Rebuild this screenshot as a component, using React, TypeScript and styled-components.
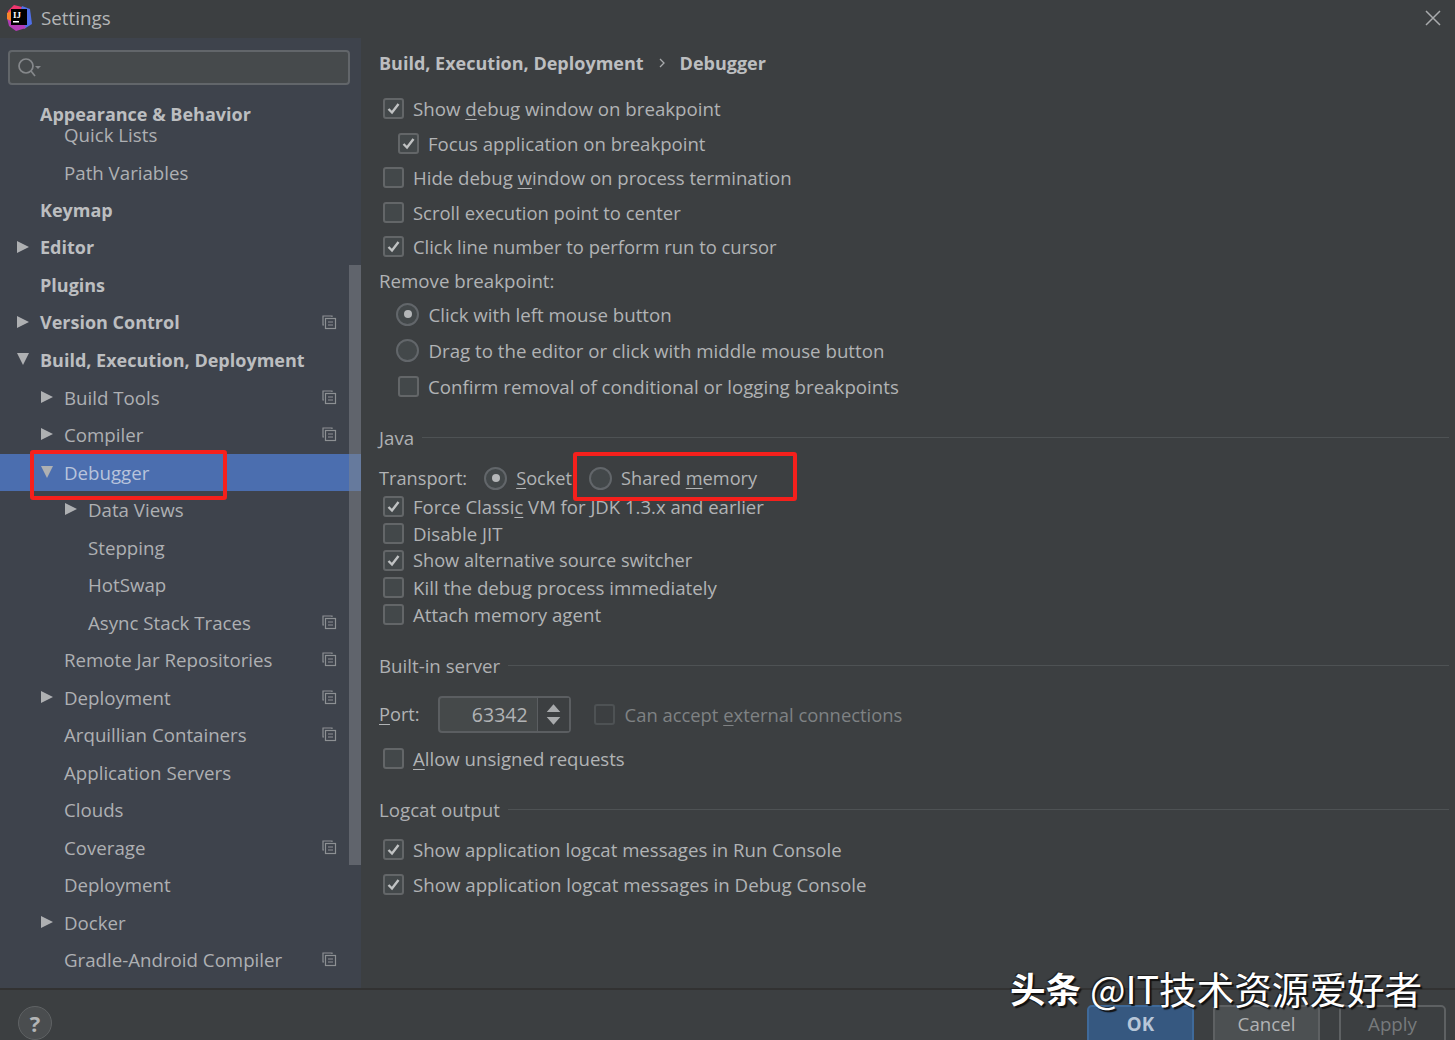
import React from "react";
import styled, { createGlobalStyle } from "styled-components";

const FONT = `"Open Sans", "Noto Sans", "Liberation Sans", sans-serif`;

const Global = createGlobalStyle`
  html, body { margin: 0; padding: 0; background: #3c3f41; }
  * { box-sizing: border-box; }
`;

const Window = styled.div`
  position: relative;
  width: 1455px;
  height: 1040px;
  overflow: hidden;
  display: flex;
  flex-direction: column;
  background: #3c3f41;
  color: #bbbbbb;
  font-family: ${FONT};
  font-size: 18.7px;
`;

const TitleBar = styled.header`
  flex: 0 0 38px;
  display: flex;
  align-items: center;
  padding: 0 14px 2px 6px;
  gap: 9px;
`;
const TitleText = styled.span`
  flex: 1;
  font-size: 18.8px;
  color: #b4b6b7;
`;
const CloseGlyph = styled.svg`
  width: 16px;
  height: 16px;
  stroke: #a9abad;
  stroke-width: 1.5;
`;

const Body = styled.div`
  flex: 0 0 950px;
  display: flex;
`;

const Sidebar = styled.nav`
  position: relative;
  flex: 0 0 361px;
  background: #3e434c;
  padding-top: 12px;
  overflow: hidden;
`;
const SearchBox = styled.div`
  width: 342px;
  height: 35px;
  margin: 0 0 31.25px 8px;
  border: 2px solid #62666a;
  border-radius: 4px;
  background: #464a4c;
  display: flex;
  align-items: center;
  padding-left: 6px;
`;
const StickyHeader = styled.div`
  position: absolute;
  left: 40px;
  top: 62px;
  font-weight: 700;
  font-size: 18px;
  line-height: 28px;
  color: #bcbec0;
`;
const TreeRow = styled.div<{ $level: number; $bold?: boolean; $selected?: boolean }>`
  position: relative;
  height: 37.5px;
  display: flex;
  align-items: center;
  padding-left: ${(p) => 40 + p.$level * 24}px;
  padding-bottom: 1px;
  font-weight: ${(p) => (p.$bold ? 700 : 400)};
  font-size: ${(p) => (p.$bold ? "18px" : "18.7px")};
  color: ${(p) => (p.$selected ? "#b8c4dc" : p.$bold ? "#bcbec0" : "#aeb0b3")};
  background: ${(p) => (p.$selected ? "#4b6eaf" : "transparent")};
`;
const Arrow = styled.svg<{ $level: number }>`
  position: absolute;
  left: ${(p) => 15 + p.$level * 24}px;
  top: 10px;
  width: 16px;
  height: 16px;
  fill: #aeb0b2;
`;
const CopyGlyph = styled.svg`
  position: absolute;
  left: 322px;
  top: 11px;
  width: 15px;
  height: 15px;
  fill: none;
  stroke: #8d9093;
  stroke-width: 1.2;
`;
const ScrollThumb = styled.div`
  position: absolute;
  left: 349px;
  top: 227px;
  width: 12px;
  height: 600px;
  background: rgba(130, 134, 140, 0.5);
`;

const Main = styled.main`
  flex: 1;
  padding: 0 6px 0 18px;
  display: flex;
  flex-direction: column;
`;
const Crumbs = styled.div`
  height: 50px;
  margin-bottom: 3.5px;
  display: flex;
  align-items: center;
  font-weight: 700;
  font-size: 18px;
  color: #bcbec0;
  gap: 13px;
`;
const CrumbSep = styled.svg`
  width: 10px;
  height: 14px;
  fill: none;
  stroke: #a8aaac;
  stroke-width: 1.3;
`;
const Row = styled.div<{ $h: number; $indent?: number; $gap?: number }>`
  flex: 0 0 ${(p) => p.$h}px;
  display: flex;
  align-items: center;
  padding-left: ${(p) => p.$indent ?? 0}px;
  gap: ${(p) => p.$gap ?? 0}px;
  white-space: nowrap;
  color: #b1b3b5;
`;
const Label = styled.span<{ $fs?: number }>`
  white-space: pre;
  font-size: ${(p) => p.$fs ?? 18.7}px;
`;
const TightLabel = styled(Label)`
  margin-left: -8px;
`;
const CheckBoxFrame = styled.span<{ $muted?: boolean }>`
  flex: 0 0 21px;
  width: 21px;
  height: 21px;
  margin: 0 9.5px 0 3.5px;
  border: 2px solid ${(p) => (p.$muted ? "#4e5254" : "#636668")};
  border-radius: 3px;
  background: ${(p) => (p.$muted ? "transparent" : "#43484a")};
  display: flex;
  align-items: center;
  justify-content: center;
`;
const CheckGlyph = styled.svg`
  width: 15px;
  height: 15px;
  fill: none;
  stroke: #c0c2c3;
  stroke-width: 2.4;
`;
const RadioFrame = styled.span<{ $on?: boolean }>`
  flex: 0 0 23px;
  width: 23px;
  height: 23px;
  border: 2px solid #62666a;
  border-radius: 50%;
  background: #43484a;
  display: flex;
  align-items: center;
  justify-content: center;
  &::after {
    content: "";
    display: ${(p) => (p.$on ? "block" : "none")};
    width: 8px;
    height: 8px;
    border-radius: 50%;
    background: #b4b6b8;
  }
`;
const Mn = styled.span`
  text-decoration: underline;
  text-underline-offset: 3px;
  text-decoration-thickness: 1px;
`;
const SectionHead = styled.div<{ $top: number; $after: number }>`
  flex: 0 0 30px;
  margin-top: ${(p) => p.$top}px;
  margin-bottom: ${(p) => p.$after}px;
  display: flex;
  align-items: center;
  gap: 8px;
  color: #aeb0b2;
  &::after {
    content: "";
    flex: 1;
    height: 1px;
    background: #4e5254;
  }
`;
const Spinner = styled.div`
  width: 133px;
  height: 37px;
  border: 2px solid #5b5e61;
  border-radius: 4px;
  background: #45494a;
  display: flex;
  align-items: stretch;
  margin-left: 18px;
`;
const SpinnerValue = styled.div`
  flex: 1;
  display: flex;
  align-items: center;
  justify-content: flex-end;
  padding-right: 9px;
  font-size: 19.5px;
  color: #b1b3b5;
`;
const SpinnerArrows = styled.svg`
  flex: 0 0 32px;
  width: 32px;
  height: 33px;
  border-left: 1px solid #5b5e61;
  background: #3c3f41;
  fill: #a8aaac;
`;
const Spacer = styled.span<{ $w: number }>`
  flex: 0 0 ${(p) => p.$w}px;
`;
const Dim = styled(Label)`
  color: #7f8284;
`;

const Footer = styled.footer`
  flex: 0 0 52px;
  border-top: 2px solid #323232;
  display: flex;
  align-items: flex-start;
  padding: 15px 9px 0 18px;
  gap: 19px;
`;
const Help = styled.div`
  width: 34px;
  height: 34px;
  margin-top: 1px;
  margin-right: auto;
  border-radius: 50%;
  border: 1px solid #5f6264;
  background: #4a4d4f;
  color: #b3b5b7;
  font-weight: 700;
  font-size: 22px;
  display: flex;
  align-items: center;
  justify-content: center;
`;
const FooterButton = styled.div<{ $kind: "ok" | "plain" | "off" }>`
  width: 107px;
  height: 44px;
  border-radius: 5px;
  border: 2px solid ${(p) => (p.$kind === "ok" ? "#3f6a9a" : "#5e6163")};
  background: ${(p) => (p.$kind === "ok" ? "#365880" : p.$kind === "plain" ? "#4c5052" : "#3c3f41")};
  color: ${(p) => (p.$kind === "ok" ? "#b7c6d8" : p.$kind === "plain" ? "#b1b3b5" : "#777a7c")};
  font-weight: ${(p) => (p.$kind === "ok" ? 700 : 400)};
  text-align: center;
  line-height: 34px;
`;

const RedBox = styled.div<{ $x: number; $y: number; $w: number; $h: number }>`
  position: absolute;
  left: ${(p) => p.$x}px;
  top: ${(p) => p.$y}px;
  width: ${(p) => p.$w}px;
  height: ${(p) => p.$h}px;
  border: 4px solid #f5201c;
  border-radius: 3px;
`;
const Watermark = styled.div`
  position: absolute;
  left: 1010px;
  top: 962px;
  display: flex;
  align-items: center;
  gap: 9px;
  color: #ffffff;
  font-family: "Noto Sans CJK SC", sans-serif;
  font-size: 37.6px;
  line-height: 52px;
  white-space: nowrap;
  text-shadow: 2px 2px 1px #111, -1px -1px 1px rgba(0, 0, 0, 0.5);
`;
const WatermarkBrand = styled.span`
  font-weight: 700;
  font-size: 35.5px;
`;

const Check = ({ on, muted }: { on?: boolean; muted?: boolean }) => (
  <CheckBoxFrame $muted={muted}>
    {on && (
      <CheckGlyph viewBox="0 0 15 15">
        <path d="M2.5 8 L6 11.5 L12.5 3" />
      </CheckGlyph>
    )}
  </CheckBoxFrame>
);

type Item = { t: string; l: number; b?: boolean; a?: "r" | "d"; c?: boolean; s?: boolean };
const items: Item[] = [
  { t: "Quick Lists", l: 1 },
  { t: "Path Variables", l: 1 },
  { t: "Keymap", l: 0, b: true },
  { t: "Editor", l: 0, b: true, a: "r" },
  { t: "Plugins", l: 0, b: true },
  { t: "Version Control", l: 0, b: true, a: "r", c: true },
  { t: "Build, Execution, Deployment", l: 0, b: true, a: "d" },
  { t: "Build Tools", l: 1, a: "r", c: true },
  { t: "Compiler", l: 1, a: "r", c: true },
  { t: "Debugger", l: 1, a: "d", s: true },
  { t: "Data Views", l: 2, a: "r" },
  { t: "Stepping", l: 2 },
  { t: "HotSwap", l: 2 },
  { t: "Async Stack Traces", l: 2, c: true },
  { t: "Remote Jar Repositories", l: 1, c: true },
  { t: "Deployment", l: 1, a: "r", c: true },
  { t: "Arquillian Containers", l: 1, c: true },
  { t: "Application Servers", l: 1 },
  { t: "Clouds", l: 1 },
  { t: "Coverage", l: 1, c: true },
  { t: "Deployment", l: 1 },
  { t: "Docker", l: 1, a: "r" },
  { t: "Gradle-Android Compiler", l: 1, c: true },
];

const Logo = () => (
  <svg width="26" height="28" viewBox="0 0 26 28">
    <polygon points="8,1 16,3 14,14 1,14 2,7" fill="#f0356e" />
    <polygon points="16,2 24,5 26,20 18,25 13,12" fill="#4f6fe8" />
    <polygon points="1,14 13,11 20,24 10,27 3,22" fill="#b23cb5" />
    <polygon points="1,9 5,7 5,17 1,15" fill="#f9842b" />
    <rect x="5" y="5" width="16" height="16" fill="#000" />
    <text x="7" y="14" fontSize="9" fontWeight="700" fill="#fff" fontFamily="Liberation Serif, serif">IJ</text>
    <rect x="7" y="17" width="6" height="1.5" fill="#fff" />
  </svg>
);

export default function App() {
  return (
    <Window>
      <Global />
      <TitleBar>
        <Logo />
        <TitleText>Settings</TitleText>
        <CloseGlyph viewBox="0 0 16 16">
          <path d="M1 1 L15 15 M15 1 L1 15" />
        </CloseGlyph>
      </TitleBar>
      <Body>
        <Sidebar>
          <SearchBox>
            <svg width="28" height="26" viewBox="0 0 28 26" fill="none" stroke="#85888b" strokeWidth="1.7">
              <circle cx="10" cy="11" r="7" />
              <path d="M15 16 L19 21" />
              <path d="M19 11 h6 l-3 3 z" fill="#85888b" stroke="none" />
            </svg>
          </SearchBox>
          {items.map((it, i) => (
            <TreeRow key={i} $level={it.l} $bold={it.b} $selected={it.s}>
              {it.a && (
                <Arrow $level={it.l} viewBox="0 0 16 16">
                  {it.a === "r" ? <path d="M2 2 L14 8 L2 14 Z" /> : <path d="M2 2 L14 2 L8 14 Z" />}
                </Arrow>
              )}
              {it.t}
              {it.c && (
                <CopyGlyph viewBox="0 0 15 15">
                  <path d="M10 2 V1 H1 V10 H2" />
                  <rect x="3.5" y="3.5" width="10" height="10" />
                  <path d="M6 7 H11 M6 10 H11" />
                </CopyGlyph>
              )}
            </TreeRow>
          ))}
          <StickyHeader>Appearance &amp; Behavior</StickyHeader>
          <ScrollThumb />
        </Sidebar>
        <Main>
          <Crumbs>
            Build, Execution, Deployment
            <CrumbSep viewBox="0 0 10 14">
              <path d="M3 3 L7 7 L3 11" />
            </CrumbSep>
            Debugger
          </Crumbs>
          <Row $h={34.5}><Check on /><Label>Show <Mn>d</Mn>ebug window on breakpoint</Label></Row>
          <Row $h={34.5} $indent={15}><Check on /><Label $fs={18.6}>Focus application on breakpoint</Label></Row>
          <Row $h={34.5}><Check /><Label $fs={18.6}>Hide debug <Mn>w</Mn>indow on process termination</Label></Row>
          <Row $h={34.5}><Check /><Label $fs={18.45}>Scroll execution point to center</Label></Row>
          <Row $h={34.5}><Check on /><Label $fs={18.4}>Click line number to perform run to cursor</Label></Row>
          <Row $h={32}><Label>Remove breakpoint:</Label></Row>
          <Row $h={36} $indent={17} $gap={9.5}><RadioFrame $on /><Label>Click with left mouse button</Label></Row>
          <Row $h={36} $indent={17} $gap={9.5}><RadioFrame /><Label>Drag to the editor or click with middle mouse button</Label></Row>
          <Row $h={36} $indent={15}><Check /><Label>Confirm removal of conditional or logging breakpoints</Label></Row>
          <SectionHead $top={18.5} $after={11.5}>Java</SectionHead>
          <Row $h={28.5} $gap={17}>
            <Label $fs={18.2}>Transport:</Label>
            <RadioFrame $on />
            <TightLabel $fs={18.2}><Mn>S</Mn>ocket</TightLabel>
            <RadioFrame />
            <TightLabel $fs={18.2}>Shared <Mn>m</Mn>emory</TightLabel>
          </Row>
          <Row $h={27}><Check on /><Label $fs={18.55}>Force Classi<Mn>c</Mn> VM for JDK 1.3.x and earlier</Label></Row>
          <Row $h={27}><Check /><Label>Disable JIT</Label></Row>
          <Row $h={27}><Check on /><Label $fs={18.2}>Show alternative source switcher</Label></Row>
          <Row $h={27}><Check /><Label>Kill the debug process immediately</Label></Row>
          <Row $h={27}><Check /><Label>Attach memory agent</Label></Row>
          <SectionHead $top={22.5} $after={10}>Built-in server</SectionHead>
          <Row $h={48}>
            <Label $fs={18.2}><Mn>P</Mn>ort:</Label>
            <Spinner>
              <SpinnerValue>63342</SpinnerValue>
              <SpinnerArrows viewBox="0 0 32 33">
                <path d="M9 14 L16 6 L23 14 Z M9 19 L23 19 L16 27 Z" />
              </SpinnerArrows>
            </Spinner>
            <Spacer $w={20} />
            <Check muted />
            <Dim $fs={18.4}>Can accept <Mn>e</Mn>xternal connections</Dim>
          </Row>
          <Row $h={40}><Check /><Label $fs={18.6}><Mn>A</Mn>llow unsigned requests</Label></Row>
          <SectionHead $top={16} $after={7.5}>Logcat output</SectionHead>
          <Row $h={35}><Check on /><Label $fs={18.6}>Show application logcat messages in Run Console</Label></Row>
          <Row $h={35}><Check on /><Label>Show application logcat messages in Debug Console</Label></Row>
        </Main>
      </Body>
      <Footer>
        <Help>?</Help>
        <FooterButton $kind="ok">OK</FooterButton>
        <FooterButton $kind="plain">Cancel</FooterButton>
        <FooterButton $kind="off">Apply</FooterButton>
      </Footer>
      <RedBox $x={30} $y={450} $w={197} $h={50} />
      <RedBox $x={573} $y={452} $w={224} $h={49} />
      <Watermark>
        <WatermarkBrand>头条</WatermarkBrand>
        <span>@IT技术资源爱好者</span>
      </Watermark>
    </Window>
  );
}
